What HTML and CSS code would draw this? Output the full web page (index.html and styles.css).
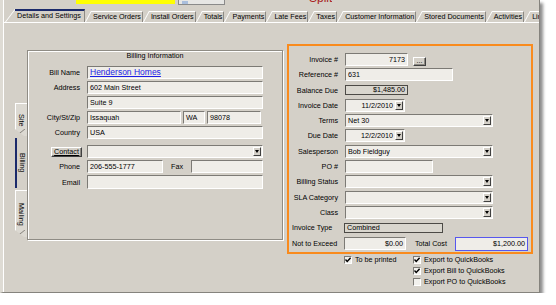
FILE: index.html
```html
<!DOCTYPE html>
<html>
<head>
<meta charset="utf-8">
<title>Invoice - Details and Settings</title>
<link rel="stylesheet" href="styles.css">
</head>
<body>
<div class="window">
  <div class="topstrip">
    <div class="ybar"></div>
    <div class="tbox"><span class="tbox-icon"></span></div>
    <div class="redtext">Split</div>
  </div>
  <div class="tabs">
    <div class="tab active">Details and Settings</div>
    <div class="tab">Service Orders</div>
    <div class="tab">Install Orders</div>
    <div class="tab">Totals</div>
    <div class="tab">Payments</div>
    <div class="tab">Late Fees</div>
    <div class="tab">Taxes</div>
    <div class="tab">Customer Information</div>
    <div class="tab">Stored Documents</div>
    <div class="tab">Activities</div>
    <div class="tab">Link</div>
  </div>
  <div class="page">
    <div class="vtabs">
      <div class="vtab site"><span>Site</span></div>
      <div class="vtab active"><span>Billing</span></div>
      <div class="vtab mailing"><span>Mailing</span></div>
    </div>

    <div class="groupbox">
      <div class="gtitle">Billing Information</div>
      <div class="bform">
        <div class="row">
          <div class="lbl">Bill Name</div>
          <div class="field f-full"><span class="link">Henderson Homes</span></div>
        </div>
        <div class="row">
          <div class="lbl">Address</div>
          <div class="field f-full">602 Main Street</div>
        </div>
        <div class="row">
          <div class="lbl"></div>
          <div class="field f-full">Suite 9</div>
        </div>
        <div class="row">
          <div class="lbl">City/St/Zip</div>
          <div class="field f-city">Issaquah</div>
          <div class="field f-st">WA</div>
          <div class="field f-zip">98078</div>
        </div>
        <div class="row">
          <div class="lbl">Country</div>
          <div class="field f-full">USA</div>
        </div>
        <div class="row contact-row">
          <div class="lbl lbl-btn"><div class="btn3d contact-btn">Contact</div></div>
          <div class="field combo f-full"><span class="cval"></span><span class="dd"></span></div>
        </div>
        <div class="row">
          <div class="lbl">Phone</div>
          <div class="field f-phone">206-555-1777</div>
          <div class="fax-lbl">Fax</div>
          <div class="field f-fax"></div>
        </div>
        <div class="row email-row">
          <div class="lbl">Email</div>
          <div class="field f-full tall"></div>
        </div>
      </div>
    </div>

    <div class="rightcol">
      <div class="invbox">
        <div class="irow">
          <div class="ilbl">Invoice #</div>
          <div class="field num w63">7173</div>
          <div class="btn3d dots">...</div>
        </div>
        <div class="irow">
          <div class="ilbl">Reference #</div>
          <div class="field w108">631</div>
        </div>
        <div class="irow">
          <div class="ilbl">Balance Due</div>
          <div class="field ro num w63 short">$1,485.00</div>
        </div>
        <div class="irow">
          <div class="ilbl">Invoice Date</div>
          <div class="field combo w60"><span class="cval num">11/2/2010</span><span class="dd"></span></div>
        </div>
        <div class="irow">
          <div class="ilbl">Terms</div>
          <div class="field combo w148"><span class="cval">Net 30</span><span class="dd"></span></div>
        </div>
        <div class="irow">
          <div class="ilbl">Due Date</div>
          <div class="field combo w60"><span class="cval num">12/2/2010</span><span class="dd"></span></div>
        </div>
        <div class="irow">
          <div class="ilbl">Salesperson</div>
          <div class="field combo w148"><span class="cval">Bob Fieldguy</span><span class="dd"></span></div>
        </div>
        <div class="irow">
          <div class="ilbl">PO #</div>
          <div class="field w88"></div>
        </div>
        <div class="irow">
          <div class="ilbl">Billing Status</div>
          <div class="field combo w148"><span class="cval"></span><span class="dd"></span></div>
        </div>
        <div class="irow">
          <div class="ilbl">SLA Category</div>
          <div class="field combo w148"><span class="cval"></span><span class="dd"></span></div>
        </div>
        <div class="irow">
          <div class="ilbl">Class</div>
          <div class="field combo w148"><span class="cval"></span><span class="dd"></span></div>
        </div>
        <div class="irow">
          <div class="ilbl left">Invoice Type</div>
          <div class="field ro w99 short">Combined</div>
        </div>
        <div class="irow">
          <div class="ilbl left">Not to Exceed</div>
          <div class="field num w62">$0.00</div>
          <div class="tc-lbl">Total Cost</div>
          <div class="field num focus w73">$1,200.00</div>
        </div>
      </div>
      <div class="checks">
        <div class="chk"><span class="cb on"><svg viewBox="0 0 8 8" width="8" height="8"><polyline points="1.5,3.6 3.2,5.4 6.6,1.8" fill="none" stroke="#000" stroke-width="1.4"/></svg></span>To be printed</div>
        <div class="chk"><span class="cb on"><svg viewBox="0 0 8 8" width="8" height="8"><polyline points="1.5,3.6 3.2,5.4 6.6,1.8" fill="none" stroke="#000" stroke-width="1.4"/></svg></span>Export to QuickBooks</div>
        <div></div>
        <div class="chk"><span class="cb on"><svg viewBox="0 0 8 8" width="8" height="8"><polyline points="1.5,3.6 3.2,5.4 6.6,1.8" fill="none" stroke="#000" stroke-width="1.4"/></svg></span>Export Bill to QuickBooks</div>
        <div></div>
        <div class="chk"><span class="cb"></span>Export PO to QuickBooks</div>
      </div>
    </div>
  </div>
</div>
</body>
</html>
```

FILE: styles.css
```css
* { box-sizing: border-box; }
html, body { margin: 0; padding: 0; background: #ffffff; }
body {
  font-family: "Liberation Sans", Arial, sans-serif;
  font-size: 7.2px;
  color: #000;
}

.window {
  width: 540px;
  height: 293px;
  background: #d4d0c8;
  border-left: 3px solid #dedbd4;
  border-right: 1px solid #85837d;
  border-bottom: 1px solid #85837d;
  box-shadow: inset 1px 0 0 #ffffff, 3px 3px 3px rgba(0, 0, 0, 0.45);
  display: flex;
  flex-direction: column;
  overflow: hidden;
}

/* top cut-off strip */
.topstrip {
  height: 9px;
  flex: none;
  display: flex;
  align-items: flex-start;
  overflow: hidden;
}
.ybar { margin-left: 73px; width: 99px; height: 4px; background: #ffff00; flex: none; }
.tbox {
  margin-left: 3px; width: 47px; height: 5px; flex: none;
  border: 1px solid #8a8a8a; border-top: none; background: #e6e6e4;
  display: flex; align-items: flex-end;
}
.tbox-icon { display: block; margin-left: 3px; width: 6px; height: 3px; background: #a9bedc; }
.redtext {
  flex: none;
  margin-left: 84px;
  height: 4px;
  overflow: hidden;
  display: flex;
  align-items: flex-end;
  font-size: 12px;
  line-height: 12px;
  color: #a81c1c;
}
.redtext::before { content: ""; }

/* horizontal tabs */
.tabs {
  height: 13px;
  flex: none;
  display: flex;
  align-items: flex-end;
  padding-left: 2px;
  white-space: nowrap;
  overflow: hidden;
}
.tab {
  position: relative;
  flex: none;
  height: 11px;
  line-height: 11px;
  padding: 0 2px 0 8px;
}
.tab::before {
  content: "";
  position: absolute;
  left: 0; bottom: 0;
  height: 100%;
  border-left: 1px solid #ffffff;
  transform: skewX(-28deg);
  transform-origin: bottom left;
}
.tab::after {
  content: "";
  position: absolute;
  left: 6px; right: 0; top: 0; bottom: 0;
  border-top: 1px solid #ffffff;
  border-right: 1px solid #8d8a84;
}
.tab.active {
  height: 13px;
  line-height: 13px;
  padding: 0 4px 0 12px;
}
.tab.active::before { transform: skewX(-37deg); }
.tab.active::after { left: 10px; border-top: 2px solid #1b2a6b; }

/* page */
.page {
  flex: 1;
  display: flex;
  align-items: flex-start;
  border-top: 1px solid #ffffff;
}

/* vertical tabs */
.vtabs {
  flex: none;
  width: 12px;
  margin-left: 12px;
  margin-top: 80px;
  display: flex;
  flex-direction: column;
}
.vtab {
  position: relative;
  display: flex;
  align-items: center;
  justify-content: center;
  background: #dcd9d2;
  border-left: 1px solid #ffffff;
  border-top: 1px solid #ffffff;
  clip-path: polygon(0 0, 100% 0, 100% 100%, 9px 100%, 0 calc(100% - 7px));
}
.vtab::after {
  content: "";
  position: absolute;
  left: 0; bottom: 0;
  width: 9px; height: 7px;
  background: linear-gradient(to top left, transparent 42%, #8d8a84 50%, transparent 58%);
}
.vtab span { writing-mode: vertical-rl; white-space: nowrap; }
.vtab.site { height: 33px; margin-bottom: 2px; }
.vtab.mailing { height: 47px; }
.vtab.active {
  height: 50px;
  margin-bottom: 2px;
  background: #d4d0c8;
  border-top: none;
  border-left: 2px solid #1b2a6b;
  clip-path: none;
}
.vtab.active::after { display: none; }

/* billing group */
.groupbox {
  flex: none;
  margin-top: 27px;
  width: 256px;
  height: 190px;
  border: 1px solid #8f8c85;
  box-shadow: inset 1px 1px 0 #ffffff, 1px 1px 0 #ffffff;
}
.gtitle { height: 9px; line-height: 9px; text-align: center; }
.bform { margin-top: 6px; }

.row {
  display: flex;
  align-items: center;
  height: 13px;
  margin-bottom: 2px;
}
.contact-row { margin-top: 6px; }
.email-row { margin-top: 1px; height: 14px; }
.lbl {
  flex: none;
  width: 52px;
  margin-right: 7px;
  text-align: right;
  white-space: nowrap;
}
.lbl-btn { display: flex; justify-content: flex-end; }

.field {
  flex: none;
  height: 13px;
  line-height: 11px;
  padding: 0 2px;
  background: #efede8;
  border-top: 1px solid #7c7a75;
  border-left: 1px solid #7c7a75;
  border-right: 1px solid #ffffff;
  border-bottom: 1px solid #ffffff;
  white-space: nowrap;
  overflow: hidden;
}
.field.tall { height: 14px; }
.link { color: #1c1ce6; text-decoration: underline; font-size: 8.5px; }

.f-full { width: 176px; }
.f-city { width: 94px; }
.f-st { width: 22px; margin-left: 2px; }
.f-zip { width: 54px; margin-left: 2px; }
.f-phone { width: 76px; }
.fax-lbl { flex: none; width: 28px; text-align: center; }
.f-fax { width: 72px; }

.btn3d {
  background: #d4d0c8;
  border-top: 1px solid #ffffff;
  border-left: 1px solid #ffffff;
  border-right: 1px solid #404040;
  border-bottom: 1px solid #404040;
  box-shadow: inset -1px -1px 0 #8d8a84;
  text-align: center;
}
.contact-btn {
  width: 31px;
  height: 10px;
  line-height: 8px;
  margin-right: -2px;
  text-decoration: underline;
}

/* combo boxes */
.combo { display: flex; align-items: center; padding-right: 1px; }
.cval { flex: 1; overflow: hidden; }
.cval.num { text-align: right; padding-right: 2px; }
.dd {
  flex: none;
  width: 8px;
  height: 9px;
  background: #d4d0c8;
  border-top: 1px solid #ffffff;
  border-left: 1px solid #ffffff;
  border-right: 1px solid #404040;
  border-bottom: 1px solid #404040;
  display: flex;
  align-items: center;
  justify-content: center;
}
.dd::before {
  content: "";
  display: block;
  border-left: 2.5px solid transparent;
  border-right: 2.5px solid transparent;
  border-top: 3px solid #000000;
}

/* invoice box */
.rightcol { flex: none; margin-left: 4px; margin-top: 21px; }
.invbox {
  width: 246px;
  height: 210px;
  border: 2px solid #f98b1e;
  padding: 7px 0 0 3px;
}
.irow {
  display: flex;
  align-items: center;
  height: 13px;
  margin-bottom: 2.3px;
}
.ilbl {
  flex: none;
  width: 46px;
  margin-right: 7px;
  text-align: right;
  white-space: nowrap;
}
.ilbl.left { text-align: left; margin-right: 6px; }
.num { text-align: right; }
.w60 { width: 60px; }
.w62 { width: 62px; }
.w63 { width: 63px; }
.w73 { width: 73px; }
.w88 { width: 88px; }
.w99 { width: 99px; }
.w108 { width: 108px; }
.w148 { width: 148px; }
.short { height: 10px; line-height: 8px; }
.ro {
  background: #d9d6ce;
  border: 1px solid #4c4a46;
}
.dots {
  flex: none;
  align-self: flex-end;
  margin-left: 5px;
  width: 13px;
  height: 9px;
  line-height: 5px;
}
.tc-lbl { flex: none; margin-left: 9px; width: 40px; white-space: nowrap; }
.focus {
  height: 14px;
  line-height: 12px;
  border: 1px solid #5757ee;
  margin-top: 2px;
}

/* checkboxes */
.checks {
  display: grid;
  grid-template-columns: 69px auto;
  grid-auto-rows: 11px;
  padding-left: 57px;
  margin-top: 0;
}
.chk { display: flex; align-items: center; white-space: nowrap; }
.cb {
  flex: none;
  width: 8px;
  height: 8px;
  margin-right: 3px;
  background: #f2f1ed;
  border-top: 1px solid #7c7a75;
  border-left: 1px solid #7c7a75;
  border-right: 1px solid #ffffff;
  border-bottom: 1px solid #ffffff;
  display: flex;
  align-items: center;
  justify-content: center;
  overflow: hidden;
}
.cb svg { display: block; flex: none; }
```
